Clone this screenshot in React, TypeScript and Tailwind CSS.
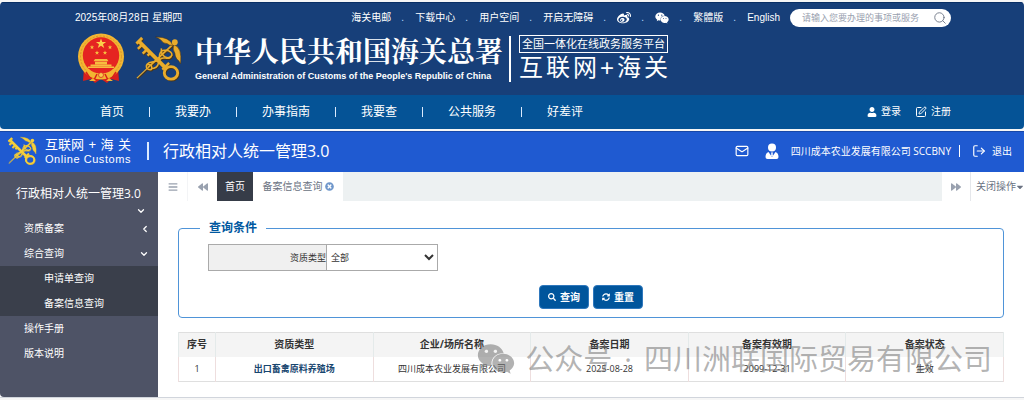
import React from 'react';
import { ChevronDown, ChevronLeft, LogOut, Mail, Search, SquarePen } from 'lucide-react';
import {
  FaBackward,
  FaBars,
  FaCaretDown,
  FaForward,
  FaSearch,
  FaSyncAlt,
  FaTimesCircle,
  FaUser,
  FaWeibo,
  FaWeixin
} from 'react-icons/fa';

const navItems = ['首页', '我要办', '办事指南', '我要查', '公共服务', '好差评'];

const columns = ['序号', '资质类型', '企业/场所名称', '备案日期', '备案有效期', '备案状态'];

const rows = [
  {
    id: 1,
    type: '出口畜禽原料养殖场',
    company: '四川成本农业发展有限公司',
    date: '2025-08-28',
    expires: '2099-12-31',
    status: '生效'
  }
];

const Emblem: React.FC = () => (
  <svg viewBox="0 0 48 51" className="h-[51px] w-12 shrink-0" aria-hidden="true">
    <path d="M7 35l-1 13 8-2 4 4 6-4 6 4 4-4 8 2-1-13z" fill="#d8201c" />
    <circle cx="24" cy="23.500" r="23" fill="#f2b632" />
    <circle cx="24" cy="23.500" r="20.500" fill="none" stroke="#d9922a" strokeWidth="1" strokeDasharray="2 1.500" />
    <circle cx="24" cy="22.500" r="18.200" fill="#e52421" />
    <path d="M24 5.500l1.300 3.600h3.800L26 11.300l1.200 3.700-3.200-2.300-3.200 2.300 1.200-3.700-3.100-2.200h3.800z" fill="#fbd04a" />
    <g fill="#f7bd3f">
      <path d="M15 12l.6 1.600h1.700l-1.400 1 .5 1.700-1.400-1-1.400 1 .5-1.700-1.400-1h1.700z" />
      <path d="M33 12l.6 1.600h1.700l-1.400 1 .5 1.700-1.400-1-1.400 1 .5-1.700-1.400-1h1.700z" />
      <path d="M20 17.500l.6 1.600h1.700l-1.400 1 .5 1.700-1.400-1-1.400 1 .5-1.700-1.400-1h1.700z" />
      <path d="M28 17.500l.6 1.600h1.700l-1.400 1 .5 1.700-1.400-1-1.400 1 .5-1.700-1.400-1h1.700z" />
      <path d="M18 26h12l1.500 2.200h-15zM18 28.800h12v2.400H18zM13.500 31.600h21v1.600h-21zM11 33.500h26v1.600H11z" />
    </g>
    <path d="M9 37.500q15 7 30 0l-2 5q-6 1-9 3l-4-3-4 3q-4-2-9-3z" fill="#f2b632" />
    <path d="M9 39l4 6M39 39l-4 6M20 41l-3 6M28 41l3 6" stroke="#d8201c" strokeWidth="1.500" fill="none" />
    <path d="M12 48l4-3 3 3zM29 48l3-3 4 3z" fill="#f2b632" />
    <circle cx="24" cy="42" r="2.500" fill="#f7c94e" stroke="#d8201c" strokeWidth=".7" />
  </svg>
);

// Crossed key and caduceus
const CustomsLogo: React.FC<{ className: string; color: string; shade: string }> = ({ className, color, shade }) => {
  const strokes = (
    <>
      <path d="M3 6l28 28" strokeWidth="4" />
      <path d="M7 10l-4.500 4.500M12 15l-4.500 4.500M15.500 18.500l-3 3" strokeWidth="2.600" />
      <path d="M1 9l6-6" strokeWidth="3" />
      <ellipse cx="37" cy="39.500" rx="7" ry="6.500" strokeWidth="3" />
      <path d="M28 36l7-7" strokeWidth="2.500" />
      <path d="M1.500 45L13 34" strokeWidth="1.200" />
      <path d="M13 34L41 8" strokeWidth="1.800" />
      <path d="M12 31q5-1 5 3t-5 1q-2-4 2-6l8-2q4-1 3-6 1-6 7-5t6 5q-2 4-7 2-5-3-4-9" strokeWidth="1.600" />
      <path d="M16 35q7 0 8-6t7-5 6-2" strokeWidth="1.600" />
    </>
  );

  return (
    <svg viewBox="0 0 49 50" className={className} fill="none" aria-hidden="true">
      <g stroke={shade} transform="translate(0.800 1)">{strokes}</g>
      <g stroke={color}>{strokes}</g>
      <path d="M39 11Q36 2 21 2q5 2 6 4 2 3 6 3 2 2 6 2zM40 10q9 3 7 20-2-4-4-5-2-3-2-6-3-4-1-9z" fill={color} stroke={shade} strokeWidth=".6" />
      <circle cx="41" cy="7.500" r="3" fill={color} />
    </svg>
  );
};

const OperatorIcon: React.FC = () => (
  <svg viewBox="0 0 14 17" className="ml-4 h-[17px] w-3.5" aria-hidden="true">
    <circle cx="7" cy="4.500" r="4" fill="#ffffff" />
    <path d="M3.500 9L7 14l3.500-5q3 1 3 5 0 2-2 2h-9q-2 0-2-2 0-4 3-5z" fill="#ffffff" />
    <path d="M6 9.500h2l-.4 1.500.4 1.500-1 1.200-1-1.200.4-1.500z" fill="#ffffff" />
  </svg>
);

const Dot: React.FC = () => <span className="w-1 text-blue-200">.</span>;

const TopBanner: React.FC = () => (
  <header className="mt-0.5 overflow-hidden rounded-t rounded-b-sm text-white">
    <div className="border-t border-[#092f65] bg-[#173f79] pr-[73px] pb-[11px] pl-[75px] font-['Liberation_Sans','Noto_Sans_CJK_SC',sans-serif]">
      <div className="flex items-center justify-between pt-1.5 text-[10px] leading-[18px]">
        <span>2025年08月28日 星期四</span>
        <div className="flex items-center gap-2.5 whitespace-nowrap">
          <a href="#mail">海关电邮</a>
          <Dot />
          <a href="#download">下载中心</a>
          <Dot />
          <a href="#space">用户空间</a>
          <Dot />
          <a href="#accessible">开启无障碍</a>
          <Dot />
          <a href="#weibo" aria-label="微博"><FaWeibo className="h-3.5 w-3.5" /></a>
          <Dot />
          <a href="#weixin" aria-label="微信"><FaWeixin className="h-3.5 w-3.5" /></a>
          <Dot />
          <a href="#traditional">繁體版</a>
          <Dot />
          <a href="#english">English</a>
          <form className="flex h-[18px] w-[161px] items-center rounded-full bg-white pr-1 pl-3">
            <input
              type="search"
              aria-label="搜索"
              placeholder="请输入您要办理的事项或服务"
              className="min-w-0 flex-1 text-[9px] text-gray-700 placeholder-gray-400 outline-none"
            />
            <button type="button" aria-label="搜索">
              <Search className="h-3.5 w-3.5 text-gray-500" strokeWidth={1.5} />
            </button>
          </form>
        </div>
      </div>

      <div className="mt-1.5 flex items-center pl-0.5">
        <Emblem />
        <CustomsLogo className="ml-2.5 h-12 w-12 shrink-0" color="#e9ac2c" shade="#4a3518" />
        <div className="ml-3 whitespace-nowrap">
          <h1 className="font-['Noto_Serif_CJK_SC','Noto_Sans_CJK_SC',serif] text-[28px] leading-8 font-bold">
            中华人民共和国海关总署
          </h1>
          <p className="mt-0.5 text-[9px] leading-4 font-bold">
            General Administration of Customs of the People's Republic of China
          </p>
        </div>
        <div className="ml-1.5 h-[46px] w-0.5 bg-white" />
        <div className="ml-2 whitespace-nowrap">
          <p className="border border-white px-0.5 text-[11px] leading-4">全国一体化在线政务服务平台</p>
          <p className="flex justify-between text-2xl leading-[30px]">
            <span>互</span>
            <span>联</span>
            <span>网</span>
            <span>+</span>
            <span>海</span>
            <span>关</span>
          </p>
        </div>
      </div>
    </div>

    <nav className="flex h-[34px] items-center justify-between bg-[#055396] pr-[73px] pl-[100px] text-xs">
      <ul className="flex items-center gap-[25px]">
        {navItems.map((item, i) => (
          <React.Fragment key={item}>
            {i > 0 && <li className="h-2.5 w-px bg-blue-100" aria-hidden="true" />}
            <li><a href="#nav">{item}</a></li>
          </React.Fragment>
        ))}
      </ul>
      <div className="flex items-center gap-3.5 text-[10px]">
        <a href="#login" className="flex items-center gap-1"><FaUser className="h-2.5 w-2.5" />登录</a>
        <a href="#register" className="flex items-center gap-1"><SquarePen className="h-3 w-3" />注册</a>
      </div>
    </nav>
  </header>
);

const AppHeader: React.FC = () => (
  <div className="mt-0.5 flex h-[41px] items-center justify-between border-t border-[#1747a8] bg-[#1f5ad1] pr-3 pb-0.5 pl-[7px] whitespace-nowrap text-white">
    <div className="flex items-center">
      <CustomsLogo className="h-[30px] w-[31px]" color="#f5cf3a" shade="#d9b236" />
      <div className="ml-[7px] font-['Liberation_Sans','Noto_Sans_CJK_SC',sans-serif]">
        <p className="flex justify-between text-[13px] leading-4"><span>互联网</span><span>+</span><span>海</span><span>关</span></p>
        <p className="text-[11px] leading-3 tracking-wider">Online Customs</p>
      </div>
      <span className="ml-4 h-[18px] w-0.5 bg-blue-100" />
      <h2 className="ml-3.5 text-base">行政相对人统一管理3.0</h2>
    </div>
    <div className="flex items-center text-[10px]">
      <a href="#messages" aria-label="消息"><Mail className="h-3.5 w-3.5" strokeWidth={2} /></a>
      <OperatorIcon />
      <span className="ml-3">四川成本农业发展有限公司 SCCBNY</span>
      <span className="ml-2 h-3 w-px bg-white" />
      <a href="#logout" className="ml-3 flex items-center gap-1.5"><LogOut className="h-3.5 w-3.5" />退出</a>
    </div>
  </div>
);

const Sidebar: React.FC = () => (
  <aside className="w-[158px] shrink-0 rounded-bl bg-[#4e5366] text-[10px] leading-[25px] text-white">
    <button type="button" className="block w-full pt-2.5 text-left">
      <span className="block pl-4 text-xs leading-6">行政相对人统一管理3.0</span>
      <ChevronDown className="mr-3 ml-auto h-2.5 w-2.5" strokeWidth={3} />
    </button>
    <nav>
      <a href="#filing" className="flex items-center justify-between pr-2 pl-6">
        资质备案
        <ChevronLeft className="h-2.5 w-2.5" strokeWidth={3} />
      </a>
      <a href="#query" className="flex items-center justify-between pr-[9px] pl-6">
        综合查询
        <ChevronDown className="h-2.5 w-2.5" strokeWidth={3} />
      </a>
      <div className="bg-[#3a3f4b]">
        <a href="#applications" className="block pl-11">申请单查询</a>
        <a href="#filings" className="block pl-11">备案信息查询</a>
      </div>
      <a href="#manual" className="block pl-6">操作手册</a>
      <a href="#version" className="block pl-6">版本说明</a>
    </nav>
  </aside>
);

const TabBar: React.FC = () => (
  <div className="flex h-[29px] items-stretch bg-[#edf1f2] text-[10px] text-gray-500">
    <button type="button" aria-label="菜单" className="flex w-[30px] items-center justify-center border-r border-gray-100 bg-white">
      <FaBars className="h-2.5 w-2.5 text-gray-400" />
    </button>
    <button type="button" aria-label="向左" className="flex w-[29px] items-center justify-center bg-white">
      <FaBackward className="h-2.5 w-2.5 text-gray-400" />
    </button>
    <button type="button" className="w-9 bg-[#363c48] text-white">首页</button>
    <button type="button" className="flex w-[90px] items-center justify-center gap-0.5 bg-white">
      备案信息查询
      <FaTimesCircle className="h-[9px] w-[9px] text-[#6f97cb]" />
    </button>
    <button type="button" aria-label="向右" className="ml-auto flex w-[29px] items-center justify-center border-r border-gray-200 bg-white">
      <FaForward className="h-2.5 w-2.5 text-gray-400" />
    </button>
    <button type="button" className="flex w-[53px] items-center justify-end bg-white">
      关闭操作
      <FaCaretDown className="h-2.5 w-2" />
    </button>
  </div>
);

const QueryForm: React.FC = () => (
  <fieldset className="rounded border border-[#4f94d8] px-[29px] pb-2">
    <legend className="-ml-2 px-[9px] text-xs leading-4 font-bold text-[#0058a0]">查询条件</legend>
    <div className="mt-2 flex h-[27px] w-[230px] items-stretch border border-[#aaaaaa] text-[9px] text-[#333333]">
      <label htmlFor="type" className="flex w-[118px] items-center justify-end border-r border-[#aaaaaa] bg-[#f0f0f0]">资质类型</label>
      <select id="type" className="min-w-0 flex-1 bg-white">
        <option>全部</option>
      </select>
    </div>
    <div className="mt-3.5 flex justify-center gap-1 text-[10px] font-bold text-white">
      <button type="button" className="flex h-6 w-[50px] items-center justify-center gap-1 rounded-sm border border-[#2f78bd] bg-[#00559c]">
        <FaSearch className="h-2 w-2" />查询
      </button>
      <button type="button" className="flex h-6 w-[50px] items-center justify-center gap-1 rounded-sm border border-[#2f78bd] bg-[#00559c]">
        <FaSyncAlt className="h-2 w-2" />重置
      </button>
    </div>
  </fieldset>
);

const ResultTable: React.FC = () => (
  <table className="mt-3.5 w-full table-fixed border-collapse border border-[#dfdfdf] text-center text-[9px] text-[#333333]">
    <thead>
      <tr className="h-6 bg-[#f4f4f4] text-[10px]">
        {columns.map((column, i) => (
          <th key={column} className={`border-x border-[#e4eaea] font-bold ${i === 0 ? 'w-[37px]' : ''}`}>{column}</th>
        ))}
      </tr>
    </thead>
    <tbody>
      {rows.map((row) => (
        <tr key={row.id} className="h-[25px]">
          <td className="border-x border-[#eedede]">{row.id}</td>
          <td className="border-x border-[#eedede] font-bold text-[#17466f]">{row.type}</td>
          <td className="border-x border-[#eedede]">{row.company}</td>
          <td className="border-x border-[#eedede]">{row.date}</td>
          <td className="border-x border-[#eedede]">{row.expires}</td>
          <td className="border-x border-[#eedede]">{row.status}</td>
        </tr>
      ))}
    </tbody>
  </table>
);

const Watermark: React.FC = () => (
  <div className="pointer-events-none absolute right-8 bottom-4 flex items-center whitespace-nowrap text-[29px] leading-[44px] text-neutral-500/55">
    <FaWeixin className="mr-2.5 h-[38px] w-[38px]" />
    <span>公众号</span>
    <span className="mx-3">·</span>
    <span>四川洲联国际贸易有限公司</span>
  </div>
);

const App: React.FC = () => {
  return (
    <div className="flex min-h-screen flex-col bg-[#f6f6f6] pb-0.5 font-['Open_Sans','Noto_Sans_CJK_SC',sans-serif]">
      <TopBanner />
      <AppHeader />
      <div className="flex flex-1 border-b border-gray-300 bg-white">
        <Sidebar />
        <main className="relative min-w-0 flex-1">
          <TabBar />
          <div className="px-5 pt-[19px] pb-3.5">
            <QueryForm />
            <ResultTable />
          </div>
          <Watermark />
        </main>
      </div>
    </div>
  );
};

export default App;
